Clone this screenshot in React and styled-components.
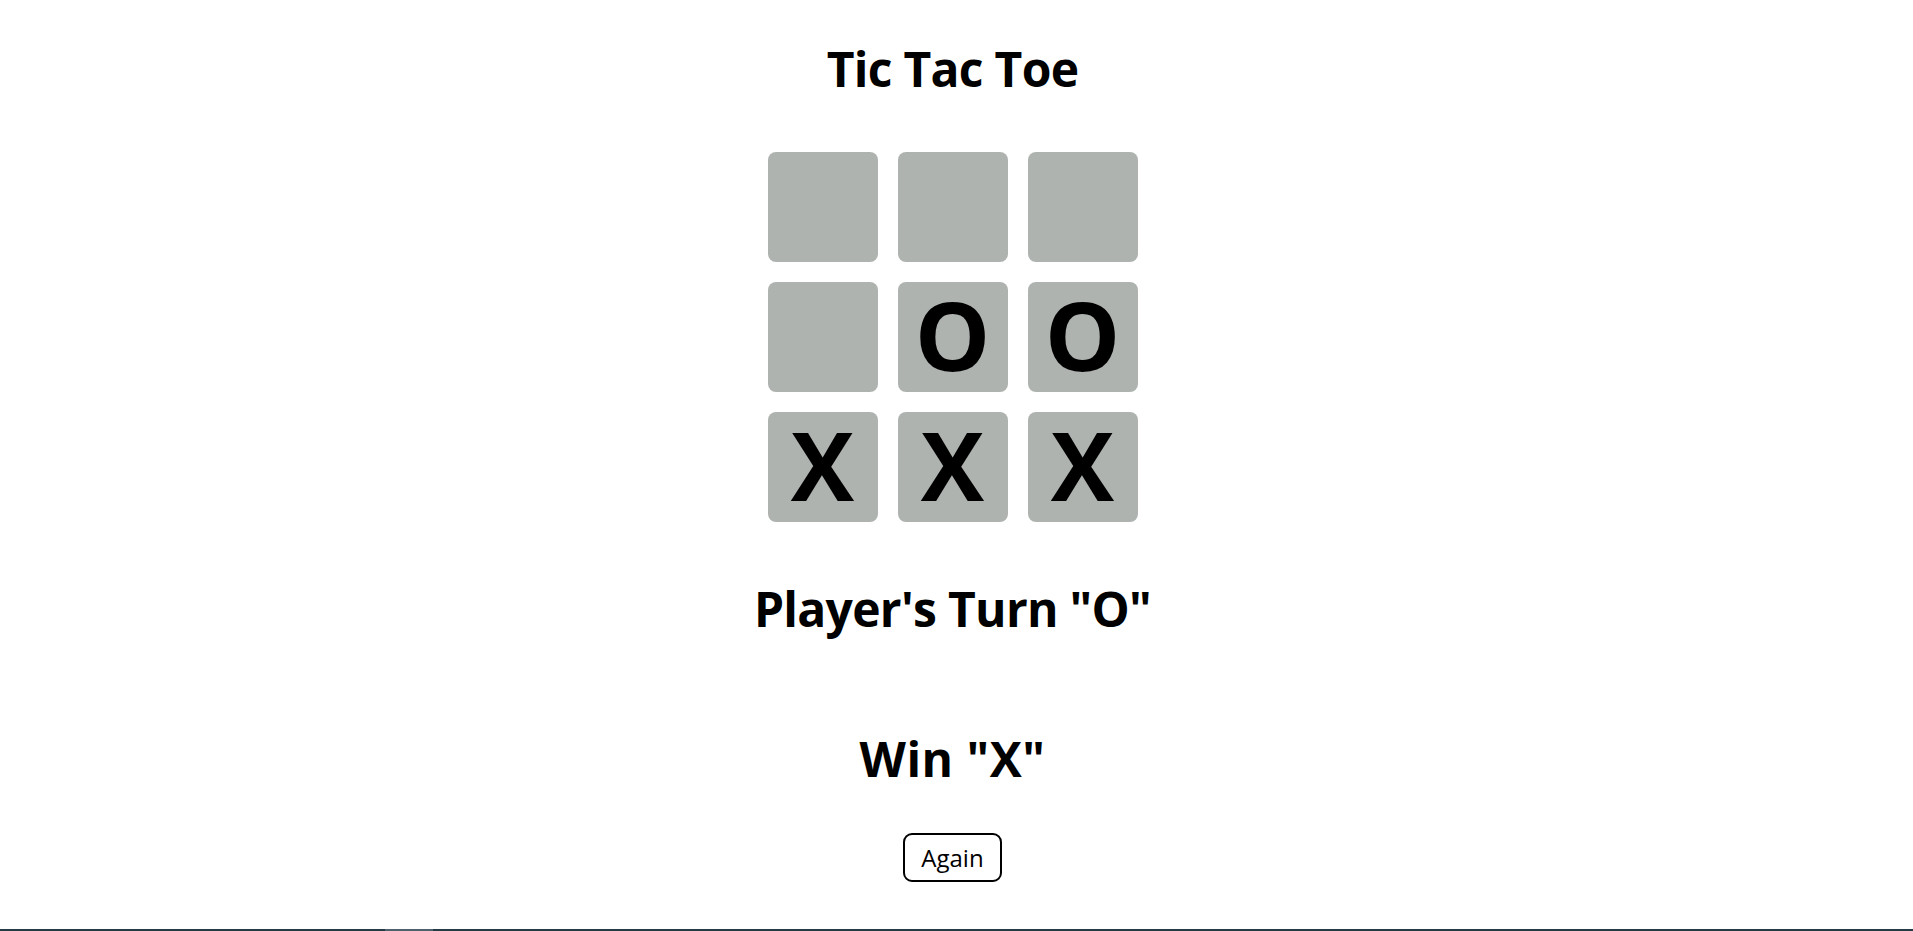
import React from "react";
import styled, { createGlobalStyle } from "styled-components";

const Global = createGlobalStyle`
  html, body { margin: 0; padding: 0; background: #ffffff; }
  body { font-family: "Open Sans", "Noto Sans", sans-serif; color: #000; }
`;

const Page = styled.div`
  min-height: 100vh;
  display: flex;
  flex-direction: column;
  box-sizing: border-box;
`;

const Main = styled.main`
  flex: 1;
  display: flex;
  flex-direction: column;
  align-items: center;
  padding-right: 8px;
`;

const Heading = styled.h1`
  margin: ${(p) => p.$mt}px 0 0;
  font-size: 48px;
  line-height: 62px;
  font-weight: 700;
  letter-spacing: ${(p) => p.$ls ?? -0.7}px;
`;

const Board = styled.div`
  margin-top: 52px;
  display: grid;
  grid-template-columns: repeat(3, 110px);
  grid-auto-rows: 110px;
  gap: 20px;
`;

const Cell = styled.div`
  box-sizing: border-box;
  padding-bottom: 6px;
  background: #afb3b0;
  border-radius: 8px;
  display: flex;
  align-items: center;
  justify-content: center;
  font-size: 95px;
  font-weight: 700;
  line-height: 1;
`;

const AgainButton = styled.button`
  margin-top: 43px;
  width: 99px;
  height: 49px;
  padding: 0;
  box-sizing: border-box;
  border: 2px solid #000;
  border-radius: 9px;
  background: #fff;
  font-family: "Open Sans", sans-serif;
  font-size: 24px;
  color: #000;
  cursor: pointer;
`;

const BottomBar = styled.div`
  height: 2px;
  background: #253a47;
  display: flex;
`;

const BarThumb = styled.div`
  margin-left: 385px;
  width: 48px;
  background: #4f616d;
`;

const cells = ["", "", "", "", "O", "O", "X", "X", "X"];

export default function App() {
  return (
    <Page>
      <Global />
      <Main>
        <Heading $mt={38}>Tic Tac Toe</Heading>
        <Board>
          {cells.map((c, i) => (
            <Cell key={i}>{c}</Cell>
          ))}
        </Board>
        <Heading $mt={56}>Player's Turn "O"</Heading>
        <Heading $mt={88} $ls={0.5}>Win "X"</Heading>
        <AgainButton>Again</AgainButton>
      </Main>
      <BottomBar>
        <BarThumb />
      </BottomBar>
    </Page>
  );
}
